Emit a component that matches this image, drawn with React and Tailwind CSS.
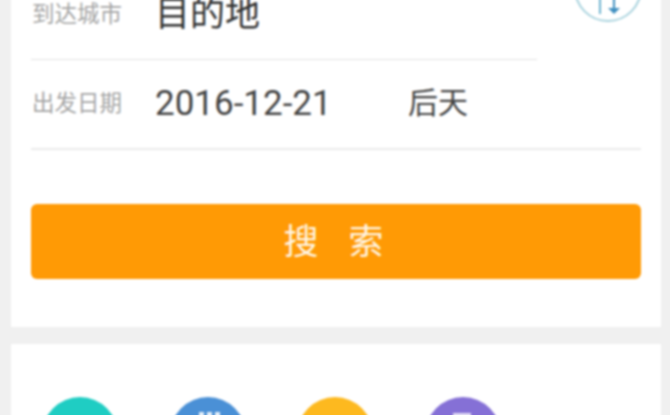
const fontStack = "font-['Roboto','Noto_Sans_CJK_SC',sans-serif]";

const circles = [
  { color: "bg-[#1fcdc3]" },
  { color: "bg-[#4a90d6]", mark: "blue" },
  { color: "bg-[#fdb91f]" },
  { color: "bg-[#8570d6]", mark: "purple" },
];

const SwapIcon = () => (
  <div className="absolute right-[19px] top-[-15px] w-[68px] h-[68px] rounded-full border-2 border-[#a9d3de] bg-white">
    <svg className="w-full h-full" viewBox="0 0 64 64" fill="none">
      <path d="M24 36V58" stroke="#6fb3d0" strokeWidth="2" />
      <path d="M38 36V54" stroke="#3f8fc0" strokeWidth="2" />
      <path d="M32 52H44L38 58Z" fill="#3f8fc0" />
    </svg>
  </div>
);

const App = () => {
  return (
    <div className={`w-[670px] h-[415px] overflow-hidden bg-[#f0f0f0] ${fontStack}`}>
      <div className="blur-[1px] ml-[11px] w-[650px]">
        <div className="relative bg-white px-5 pb-12">
          <SwapIcon />
          <div className="flex items-center h-[91px] pt-[2px] mt-[-31px] w-[506px] border-b border-[#e2e2e2]">
            <span className="w-[124px] pl-px text-[22.5px] text-[#a6a6a6]">到达城市</span>
            <span className="text-[35px] text-[#333333]">目的地</span>
          </div>
          <div className="flex items-center h-[90px] border-b-2 border-[#ebebeb]">
            <span className="w-[124px] pl-px text-[22.5px] text-[#a6a6a6]">出发日期</span>
            <span className="w-[253px] text-[35px] text-[#444444]">2016-12-21</span>
            <span className="mb-[4px] text-[30px] text-[#444444]">后天</span>
          </div>
          <button className="block w-full h-[75px] mt-[54px] pr-[5px] pt-[3px] rounded-md bg-[#ff9a05] text-[35px] text-[#fff6e6]">
            搜<span className="ml-[30px]">索</span>
          </button>
        </div>
        <div className="mt-[17px] h-[80px] bg-white pt-[53px] pl-[31px] flex gap-[51.5px]">
          {circles.map((c, i) => (
            <div key={i} className={`relative shrink-0 w-[76px] h-[76px] rounded-full ${c.color}`}>
              {c.mark === "blue" && (
                <div className="absolute left-[29px] top-[15px] flex gap-[3px]">
                  <div className="w-[5px] h-2 bg-[#e6f0fa]" />
                  <div className="w-[5px] h-2 bg-[#e6f0fa]" />
                  <div className="w-[5px] h-2 bg-[#e6f0fa]" />
                </div>
              )}
              {c.mark === "purple" && <div className="absolute left-7 top-4 w-[18px] h-2 bg-[#e4dff6]" />}
            </div>
          ))}
        </div>
      </div>
    </div>
  );
};

export default App;
